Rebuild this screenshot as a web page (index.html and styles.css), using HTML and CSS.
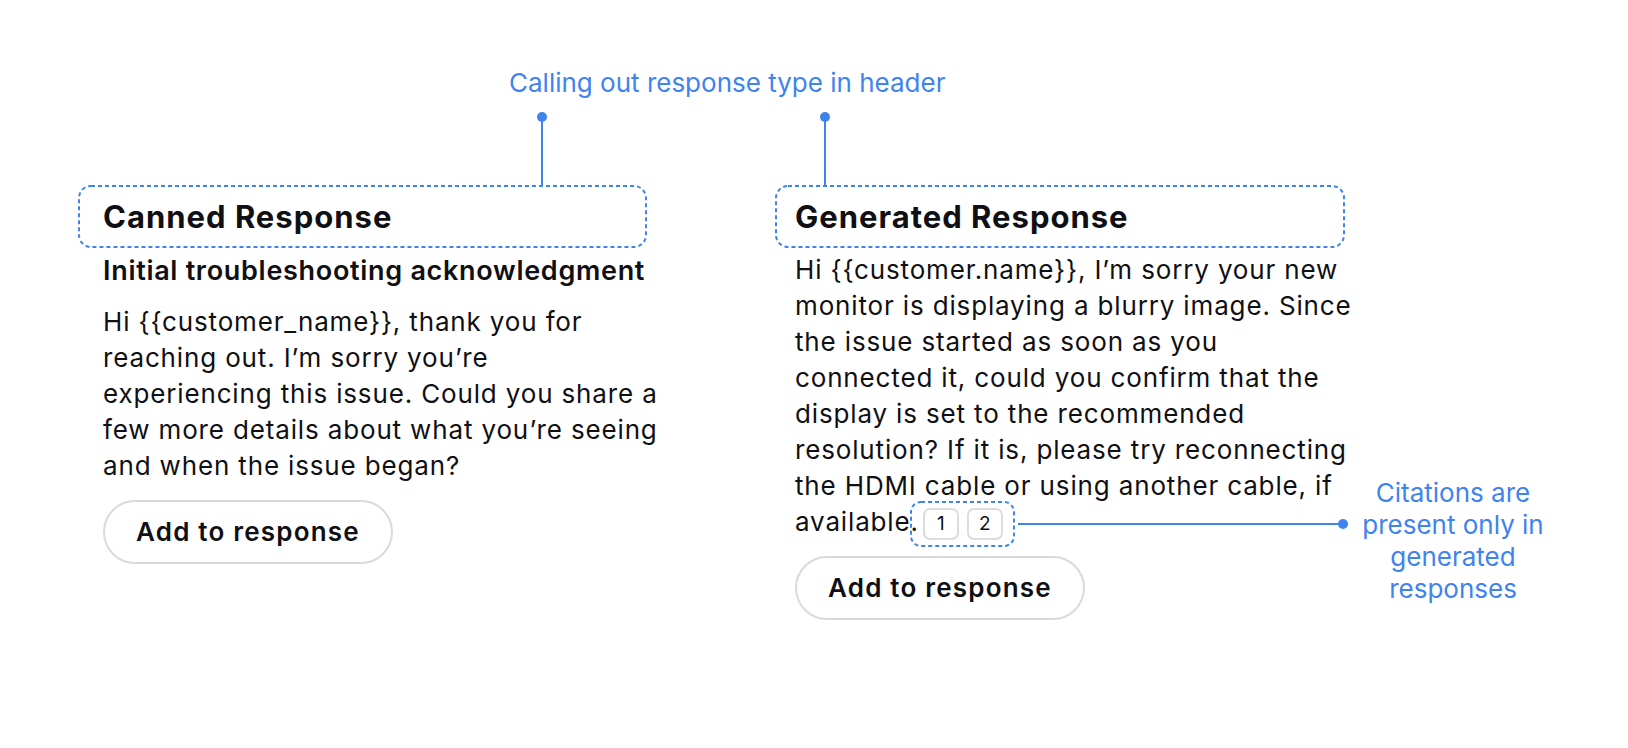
FILE: index.html
```html
<!DOCTYPE html>
<html>
<head>
  <title>Response types</title>
  <link rel="stylesheet" href="styles.css">
</head>
<body>
  <main class="board">
    <div class="callout-label">Calling out response type in header</div>

    <div class="columns">
      <section class="card">
        <header class="card-head">
          <svg class="frame" aria-hidden="true"><rect></rect></svg>
          <span class="pin pin-left"></span>
          <h2>Canned Response</h2>
        </header>
        <h3 class="card-subtitle">Initial troubleshooting acknowledgment</h3>
        <p class="card-body">Hi {{customer_name}}, thank you for<br>reaching out. I’m sorry you’re<br>experiencing this issue. Could you share a<br>few more details about what you’re seeing<br>and when the issue began?</p>
        <button class="add-btn">Add to response</button>
      </section>

      <section class="card card-generated">
        <header class="card-head">
          <svg class="frame" aria-hidden="true"><rect></rect></svg>
          <span class="pin pin-right"></span>
          <h2>Generated Response</h2>
        </header>
        <p class="card-body">Hi {{customer.name}}, I’m sorry your new<br>monitor is displaying a blurry image. Since<br>the issue started as soon as you<br>connected it, could you confirm that the<br>display is set to the recommended<br>resolution? If it is, please try reconnecting<br>the HDMI cable or using another cable, if<br>available.<span class="citations"><svg class="frame" aria-hidden="true"><rect></rect></svg><span class="chip">1</span><span class="chip">2</span><span class="leader"></span></span></p>
        <button class="add-btn">Add to response</button>
      </section>

      <aside class="note">Citations are present only in generated responses</aside>
    </div>
  </main>
</body>
</html>
```

FILE: styles.css
```css
body {
  margin: 0;
  background-color: #fff;
  font-family: Inter, "Noto Sans", sans-serif;
  color: #101014;
}

.board {
  padding: 67px 0 0 103px;
}

/* annotation colour */
.callout-label,
.note {
  color: #3f83ee;
  font-size: 26px;
  line-height: 32px;
}

.callout-label {
  margin-left: 406px;
  margin-bottom: 86px;
}

.columns {
  display: flex;
  align-items: flex-start;
}

.card {
  width: 560px;
  display: flex;
  flex-direction: column;
  align-items: flex-start;
}

.card-generated {
  width: 552px;
  margin-left: 132px;
}

.card-head {
  position: relative;
  align-self: stretch;
  margin: 0 16px 0 -25px;
  padding: 14px 25px;
}

.card-generated .card-head {
  margin: 0 2px 0 -20px;
  padding: 14px 20px;
}

.card-head h2 {
  margin: 0;
  font-size: 31px;
  line-height: 35px;
  font-weight: 700;
  letter-spacing: 1px;
  white-space: nowrap;
}

/* dotted outline around annotated parts */
.frame {
  position: absolute;
  top: 0;
  left: 0;
  width: 100%;
  height: 100%;
  overflow: visible;
  pointer-events: none;
}

.frame rect {
  x: 1px;
  y: 1px;
  width: calc(100% - 2px);
  height: calc(100% - 2px);
  rx: 12px;
  fill: none;
  stroke: #3f83ee;
  stroke-width: 2;
  stroke-dasharray: 4 3;
}

/* connector from the header up to the label */
.pin {
  position: absolute;
  bottom: 100%;
  width: 2px;
  height: 68px;
  background-color: #3f83ee;
}

.pin::before {
  content: "";
  position: absolute;
  top: -5px;
  left: -4px;
  width: 10px;
  height: 10px;
  border-radius: 50%;
  background-color: #3f83ee;
}

.pin-left {
  left: 463px;
}

.pin-right {
  left: 49px;
}

.card-subtitle {
  margin: 5px 0 0;
  font-size: 27px;
  line-height: 36px;
  font-weight: 600;
  letter-spacing: 0.7px;
  white-space: nowrap;
}

.card-body {
  margin: 15px 0 0;
  font-size: 26px;
  line-height: 36px;
  letter-spacing: 0.85px;
  white-space: nowrap;
}

.card-generated .card-body {
  margin-top: 4px;
}

.citations {
  position: relative;
  display: inline-flex;
  gap: 8px;
  margin-left: 4px;
  vertical-align: middle;
  letter-spacing: 0;
}

.citations .frame {
  top: -7px;
  left: -13px;
  width: calc(100% + 25px);
  height: calc(100% + 14px);
}

.citations .frame rect {
  rx: 10px;
}

.chip {
  width: 32px;
  height: 28px;
  border: 2px solid #dcdcdc;
  border-radius: 7px;
  font-size: 19px;
  line-height: 28px;
  text-align: center;
  color: #101014;
}

/* line from the citations out to the side note */
.leader {
  position: absolute;
  top: 15px;
  left: calc(100% + 15px);
  width: 325px;
  height: 2px;
  background-color: #3f83ee;
}

.leader::after {
  content: "";
  position: absolute;
  right: -5px;
  top: -4px;
  width: 10px;
  height: 10px;
  border-radius: 50%;
  background-color: #3f83ee;
}

.add-btn {
  margin-top: 16px;
  padding: 15px 31px;
  border: 2px solid #dadada;
  border-radius: 32px;
  background-color: #fff;
  font-family: inherit;
  font-size: 26px;
  line-height: 30px;
  font-weight: 600;
  letter-spacing: 1.2px;
  color: #101014;
}

.note {
  width: 200px;
  margin: 292px 0 0 6px;
  text-align: center;
}
```
